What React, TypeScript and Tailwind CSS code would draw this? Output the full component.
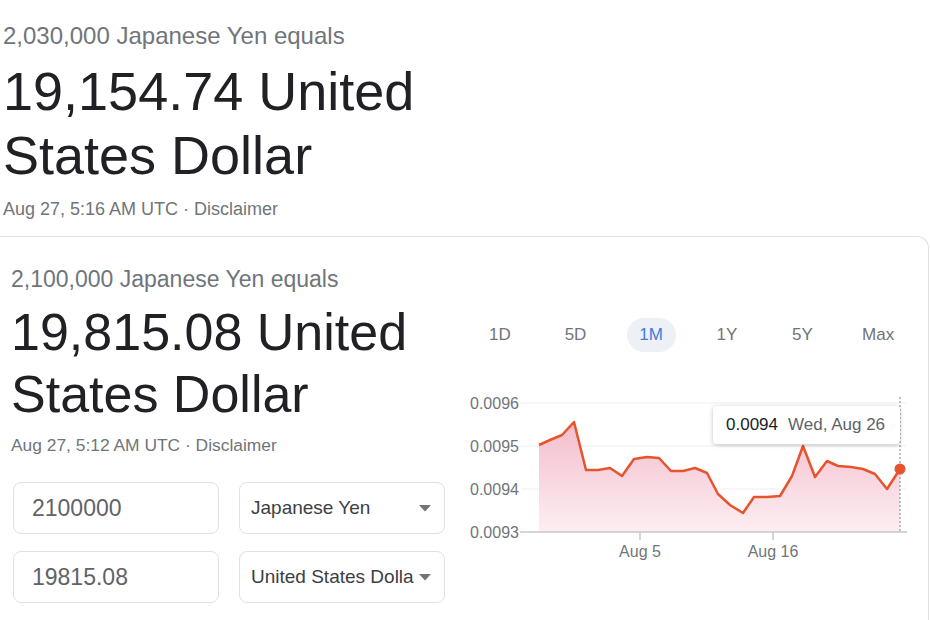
import React from 'react';

const tabs = ['1D', '5D', '1M', '1Y', '5Y', 'Max'];

// chart points, in svg px (svg sits at page 460,390)
const pts: [number, number][] = [
  [79, 55], [90, 50], [102, 45], [114, 32], [126, 80], [138, 80], [150, 78], [162, 86],
  [174, 69], [187, 67], [199, 68], [211, 81], [223, 81], [235, 78], [247, 83], [258, 104],
  [270, 115], [283, 123], [294, 107], [307, 107], [320, 106], [332, 86], [343, 56], [355, 87],
  [367, 71], [378, 76], [391, 77], [403, 79], [415, 84], [427, 99], [440, 79],
];

const linePath = pts.map(([x, y], i) => `${i ? 'L' : 'M'}${x} ${y}`).join(' ');
const areaPath = `${linePath} L440 142 L79 142 Z`;

const Caret = () => (
  <svg width="12" height="7" viewBox="0 0 12 7" className="ml-auto shrink-0">
    <path d="M0 0 L12 0 L6 6.5 Z" fill="#70757a" />
  </svg>
);

const Chart: React.FC = () => (
  <div className="relative mt-[38px] h-[180px] w-[460px]">
    <svg width="460" height="180" viewBox="0 0 460 180">
      <defs>
        <linearGradient id="fillGrad" x1="0" y1="30" x2="0" y2="142" gradientUnits="userSpaceOnUse">
          <stop offset="0" stopColor="#f3bccb" />
          <stop offset="1" stopColor="#fdeef2" />
        </linearGradient>
      </defs>
      {[13, 56, 99].map((y) => (
        <line key={y} x1="61" x2="446" y1={y} y2={y} stroke="#eeeeee" strokeWidth="1" />
      ))}
      <g fill="#70757a" fontSize="16" fontFamily="'Liberation Sans', Arial, sans-serif">
        <text x="10" y="19">0.0096</text>
        <text x="10" y="62">0.0095</text>
        <text x="10" y="105">0.0094</text>
        <text x="10" y="148">0.0093</text>
        <text x="180" y="167" textAnchor="middle">Aug 5</text>
        <text x="313" y="167" textAnchor="middle">Aug 16</text>
      </g>
      <path d={areaPath} fill="url(#fillGrad)" />
      <line x1="440" x2="440" y1="7" y2="142" stroke="#80868b" strokeWidth="1" strokeDasharray="2 2" />
      <path d={linePath} fill="none" stroke="#e6532d" strokeWidth="2.5" strokeLinejoin="round" />
      <line x1="60" x2="447" y1="142" y2="142" stroke="#c4c7cc" strokeWidth="1.5" />
      <line x1="180" x2="180" y1="142" y2="150" stroke="#c4c7cc" strokeWidth="1.5" />
      <line x1="313" x2="313" y1="142" y2="150" stroke="#c4c7cc" strokeWidth="1.5" />
      <circle cx="440" cy="79" r="5.5" fill="#e6532d" />
    </svg>

    {/* hover tooltip */}
    <div className="absolute left-[253px] top-[16px] flex h-[38px] w-[187px] items-center gap-[10px] rounded bg-white pl-[13px] text-[17px] shadow-[0_1px_4px_rgba(0,0,0,0.25)]">
      <span className="text-[#202124]">0.0094</span>
      <span className="text-[#5f6368]">Wed, Aug 26</span>
    </div>
  </div>
);

export default function App() {
  return (
    <div className="h-[620px] w-[930px] overflow-hidden bg-white font-['Liberation_Sans',Arial,sans-serif]">
      {/* previous result */}
      <div className="pl-[3px] pt-[21px]">
        <div className="text-[24px] leading-[30px] text-[#70757a]">2,030,000 Japanese Yen equals</div>
        <div className="mt-[8px] text-[54px] leading-[64px] text-[#202124]">
          19,154.74 United
          <br />
          States Dollar
        </div>
        <div className="mt-[10px] text-[18px] leading-[24px] text-[#70757a]">
          Aug 27, 5:16 AM UTC · Disclaimer
        </div>
      </div>

      {/* converter card */}
      <div className="-ml-3 mt-[15px] flex h-[400px] w-[941px] rounded-tr-xl border border-b-0 border-[#dfe1e5]">
        <div className="w-[471px] shrink-0 pl-[22px] pt-[28px]">
          <div className="text-[23px] leading-[28px] text-[#70757a]">2,100,000 Japanese Yen equals</div>
          <div className="mt-[8px] text-[52px] leading-[62px] text-[#202124]">
            19,815.08 United
            <br />
            States Dollar
          </div>
          <div className="mt-[9px] text-[17.4px] leading-[22px] text-[#70757a]">
            Aug 27, 5:12 AM UTC · Disclaimer
          </div>

          <div className="ml-[2px] mt-[26px] flex flex-col gap-[17px]">
            {[
              ['2100000', 'Japanese Yen'],
              ['19815.08', 'United States Dollar'],
            ].map(([amount, currency]) => (
              <div key={amount} className="flex gap-[20px]">
                <div className="flex h-[52px] w-[206px] items-center rounded-lg border border-[#dfe1e5] pl-[18px] text-[23px] text-[#5f6368]">
                  {amount}
                </div>
                <div className="flex h-[52px] w-[206px] items-center rounded-lg border border-[#dfe1e5] pl-[11px] pr-[13px]">
                  <span className="w-[163px] overflow-hidden whitespace-nowrap text-[19px] text-[#3c4043]">
                    {currency}
                  </span>
                  <Caret />
                </div>
              </div>
            ))}
          </div>
        </div>

        <div className="flex flex-col">
          <div className="ml-[2px] mt-[81px] grid w-[454px] grid-cols-6">
            {tabs.map((t) => (
              <div key={t} className="flex justify-center">
                <span
                  className={
                    t === '1M'
                      ? 'flex h-[34px] w-[49px] items-center justify-center rounded-full bg-[#edf0f5] text-[17px] text-[#3f7be0]'
                      : 'flex h-[34px] items-center justify-center text-[17px] text-[#70757a]'
                  }
                >
                  {t}
                </span>
              </div>
            ))}
          </div>
          <Chart />
        </div>
      </div>
    </div>
  );
}
